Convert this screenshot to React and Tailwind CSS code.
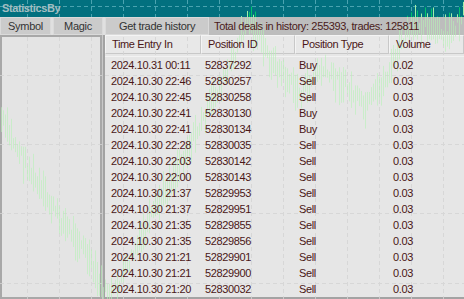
import React from "react";

const rows = [
  ["2024.10.31 00:11", "52837292", "Buy", "0.02"],
  ["2024.10.30 22:46", "52830257", "Sell", "0.03"],
  ["2024.10.30 22:45", "52830258", "Sell", "0.03"],
  ["2024.10.30 22:41", "52830130", "Buy", "0.03"],
  ["2024.10.30 22:41", "52830134", "Buy", "0.03"],
  ["2024.10.30 22:28", "52830035", "Sell", "0.03"],
  ["2024.10.30 22:03", "52830142", "Sell", "0.03"],
  ["2024.10.30 22:00", "52830143", "Sell", "0.03"],
  ["2024.10.30 21:37", "52829953", "Sell", "0.03"],
  ["2024.10.30 21:37", "52829951", "Sell", "0.03"],
  ["2024.10.30 21:35", "52829855", "Sell", "0.03"],
  ["2024.10.30 21:35", "52829856", "Sell", "0.03"],
  ["2024.10.30 21:21", "52829901", "Sell", "0.03"],
  ["2024.10.30 21:21", "52829900", "Sell", "0.03"],
  ["2024.10.30 21:20", "52830032", "Sell", "0.03"],
];

const columns = ["Time Entry In", "Position ID", "Position Type", "Volume"];

// price path behind the panels, (x, y) keypoints
const path = [
  [0, 118], [18, 150], [40, 190], [62, 222], [82, 245], [98, 282], [110, 300],
  [135, 250], [165, 190], [200, 125], [228, 70], [248, 18], [270, 60],
  [300, 95], [320, 70], [345, 85], [365, 110], [385, 80], [405, 35],
  [425, 20], [445, 40], [464, 14],
];

function priceAt(x) {
  for (let i = 0; i < path.length - 1; i++) {
    const [x0, y0] = path[i];
    const [x1, y1] = path[i + 1];
    if (x >= x0 && x <= x1) return y0 + ((y1 - y0) * (x - x0)) / (x1 - x0);
  }
  return path[path.length - 1][1];
}

function makeBars() {
  const bars = [];
  let seed = 7;
  const rnd = () => {
    seed = (seed * 9301 + 49297) % 233280;
    return seed / 233280;
  };
  for (let x = 1; x < 464; x += 2) {
    const c = priceAt(x) + (rnd() - 0.5) * 14;
    const h = 8 + rnd() * 30;
    bars.push({ x, y1: c - h / 2, y2: c + h / 2 });
  }
  return bars;
}

const bars = makeBars();

function ChartOverlay() {
  return (
    <svg
      className="absolute inset-0 z-[5] pointer-events-none"
      width="464"
      height="299"
      viewBox="0 0 464 299"
    >
      <defs>
        <clipPath id="top">
          <rect x="0" y="0" width="464" height="17" />
        </clipPath>
        <clipPath id="below">
          <rect x="0" y="17" width="464" height="282" />
        </clipPath>
      </defs>
      {/* grid */}
      <g stroke="#4aa3b0" strokeDasharray="4 3" strokeWidth="1" clipPath="url(#top)">
        <line x1="0" y1="6.5" x2="464" y2="6.5" />
        {Array.from({ length: 15 }, (_, i) => (
          <line key={i} x1={27.5 + i * 32} y1="0" x2={27.5 + i * 32} y2="17" />
        ))}
      </g>
      <g stroke="#d4d4d4" strokeDasharray="4 3" strokeWidth="1" clipPath="url(#below)" opacity="0.8">
        <line x1="0" y1="75.5" x2="464" y2="75.5" />
        <line x1="0" y1="144.5" x2="464" y2="144.5" />
        <line x1="0" y1="213.5" x2="464" y2="213.5" />
        <line x1="0" y1="283.5" x2="464" y2="283.5" />
        {Array.from({ length: 15 }, (_, i) => (
          <line key={i} x1={27.5 + i * 32} y1="37" x2={27.5 + i * 32} y2="299" />
        ))}
      </g>
      {/* bars */}
      <g clipPath="url(#top)" strokeWidth="1">
        {bars.map((b, i) =>
          b.y1 < 17 ? (
            <line key={i} x1={b.x + 0.5} y1={b.y1} x2={b.x + 0.5} y2={b.y2} stroke={i % 3 ? "#00c46a" : "#9ff0a8"} />
          ) : null
        )}
      </g>
      <g clipPath="url(#below)" strokeWidth="1" opacity="0.6">
        {bars.map((b, i) => (
          <line key={i} x1={b.x + 0.5} y1={b.y1} x2={b.x + 0.5} y2={b.y2} stroke="#b8f2b8" />
        ))}
      </g>
    </svg>
  );
}

export default function App() {
  return (
    <div
      className="relative w-[464px] h-[299px] overflow-hidden bg-[#02707f] flex flex-col"
      style={{ fontFamily: '"Liberation Sans", Arial, sans-serif' }}
    >
      {/* Title */}
      <div className="relative z-10 h-[17px] flex items-center pl-[2px] text-[11px] font-bold tracking-[-0.4px] text-[#a3bec2]">
        StatisticsBy
      </div>

      {/* Toolbar */}
      <div className="h-[20px] flex bg-[#bdbdbd] text-[11px] tracking-[-0.3px]">
        <button className="w-[51px] h-full bg-[#cbcbcb] border border-[#dadada] text-[#333] flex items-center justify-center">
          <span className="relative z-10">Symbol</span>
        </button>
        <div className="w-[2px] bg-[#e0e0e0]" />
        <button className="w-[50px] h-full bg-[#cbcbcb] border border-[#dadada] text-[#333] flex items-center justify-center">
          <span className="relative z-10">Magic</span>
        </button>
        <div className="w-[2px] bg-[#e0e0e0]" />
        <button className="w-[104px] h-full bg-[#cbcbcb] border border-[#dadada] text-[#333] flex items-center justify-center">
          <span className="relative z-10">Get trade history</span>
        </button>
        <div className="flex-1 flex items-center pl-[5px] text-[#4a1a1a] whitespace-nowrap tracking-[-0.35px]">
          <span className="relative z-10">Total deals in history: 255393, trades: 125811</span>
        </div>
      </div>

      {/* Main */}
      <div className="flex-1 flex bg-[#c9c9c9] gap-[1px]">
        <div className="w-[102px] bg-[#e4e4e4] border-2 border-[#a8a8a8]" />
        <div className="flex-1 bg-[#e6e6e6] border-l-2 border-b-2 border-[#a3a3a3] flex flex-col text-[11px] text-[#4a1616] tracking-[-0.35px]">
          <div className="grid grid-cols-[96px_94px_94px_1fr] h-[19px] border-b border-[#bcbcbc]">
            {columns.map((c) => (
              <div
                key={c}
                className="flex items-center pl-[6px] bg-[#e8e8e8] border border-[#c8c8c8] border-t-[#f4f4f4] border-l-[#f4f4f4]"
              >
                <span className="relative z-10">{c}</span>
              </div>
            ))}
          </div>
          <div className="h-[3px] border-b border-[#f2f2f2]" />
          {rows.map((r, i) => (
            <div key={i} className="relative z-10 grid grid-cols-[96px_94px_94px_1fr] h-[16px] items-center">
              <div className="pl-[6px]">{r[0]}</div>
              <div className="pl-[4px]">{r[1]}</div>
              <div className="pl-[4px]">{r[2]}</div>
              <div className="pl-[4px]">{r[3]}</div>
            </div>
          ))}
        </div>
      </div>

      <ChartOverlay />
    </div>
  );
}
